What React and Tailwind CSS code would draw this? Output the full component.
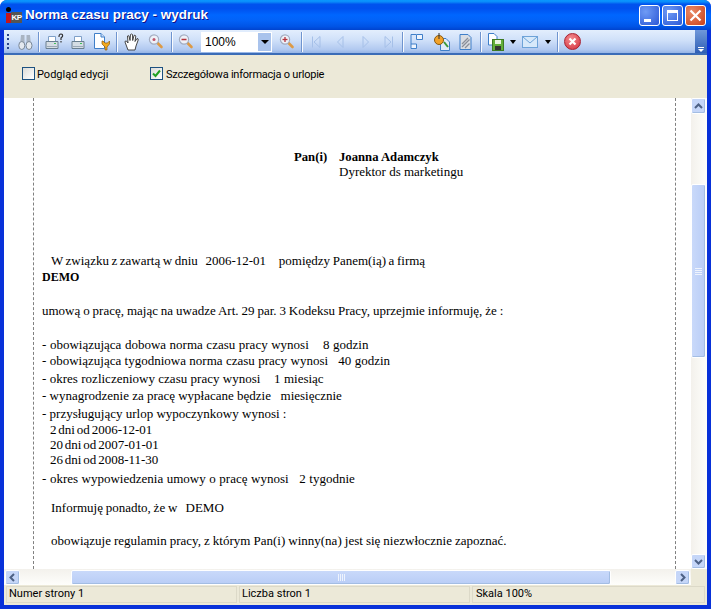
const lines = [
  { t: "W związku z zawartą w dniu   2006-12-01     pomiędzy Panem(ią) a firmą", top: 254, x: "pl-[9px] [word-spacing:-0.7px]" },
  { t: "DEMO", top: 270, x: "text-[12px] font-bold" },
  { t: "umową o pracę, mając na uwadze Art. 29 par. 3 Kodeksu Pracy, uprzejmie informuję, że :", top: 304, x: "[word-spacing:-0.33px]" },
  { t: "- obowiązująca dobowa norma czasu pracy wynosi    8 godzin", top: 338, x: "[word-spacing:0.3px]" },
  { t: "- obowiązująca tygodniowa norma czasu pracy wynosi   40 godzin", top: 354, x: "[word-spacing:0.15px]" },
  { t: "- okres rozliczeniowy czasu pracy wynosi    1 miesiąc", top: 372, x: "[word-spacing:0.15px]" },
  { t: "- wynagrodzenie za pracę wypłacane będzie   miesięcznie", top: 389, x: "[word-spacing:-0.05px]" },
  { t: "- przysługujący urlop wypoczynkowy wynosi :", top: 407, x: "[word-spacing:0px]" },
  { t: "2 dni od 2006-12-01", top: 423, x: "pl-[8px] [word-spacing:-1.4px]" },
  { t: "20 dni od 2007-01-01", top: 438, x: "pl-[8px] [word-spacing:-1.4px]" },
  { t: "26 dni od 2008-11-30", top: 453, x: "pl-[8px] [word-spacing:-1.4px]" },
  { t: "- okres wypowiedzenia umowy o pracę wynosi   2 tygodnie", top: 472, x: "[word-spacing:0.3px]" },
  { t: "Informuję ponadto, że w   DEMO", top: 501, x: "pl-[9px] [word-spacing:-0.5px]" },
  { t: "obowiązuje regulamin pracy, z którym Pan(i) winny(na) jest się niezwłocznie zapoznać.", top: 534, x: "pl-[9px] [word-spacing:-0.2px]" },
];

function Sep({ ml }) {
  return <div className={`${ml} h-[20px] w-[2px] border-l border-[#6f94cf] bg-white/90`} />;
}

function Ic({ ml, w, children }) {
  return (
    <svg className={`${ml} shrink-0`} width={w} height="18" viewBox={`0 0 ${w} 18`}>
      {children}
    </svg>
  );
}

function Glass({ mark }) {
  return (
    <>
      <path d="M9.5 10 L13.5 14" stroke="#dd9a45" strokeWidth="2.6" strokeLinecap="round" />
      <circle cx="6" cy="6.5" r="4.6" fill="#eef1f8" stroke="#a3acc0" strokeWidth="1.2" />
      {mark === "dot" && <circle cx="6" cy="6.5" r="1.5" fill="#c0556a" />}
      {mark !== "dot" && <path d="M3.5 6.5 H8.5" stroke="#b5343c" strokeWidth="1.3" />}
      {mark === "plus" && <path d="M6 4 V9" stroke="#b5343c" strokeWidth="1.3" />}
    </>
  );
}

function Printer({ x = 0 }) {
  return (
    <g transform={`translate(${x} 1)`}>
      <path d="M3.5 2.5 H10.5 V8.5 H3.5 Z" fill="#fff" stroke="#7fa0c8" />
      <path d="M1 7.5 H13 V14.5 H1 Z" fill="#d5dde4" stroke="#6a7f8f" />
      <path d="M2 12.5 H12" stroke="#9aa8b6" />
      <rect x="9" y="9" width="2" height="1" fill="#3fc05a" />
    </g>
  );
}

function Nav({ d }) {
  return <path d={d} fill="none" stroke="#a6c0e8" strokeWidth="1" />;
}

function Caret({ ml }) {
  return <div className={`${ml} h-0 w-0 border-x-[3px] border-t-[4px] border-x-transparent border-t-black`} />;
}

function Check({ checked, ml }) {
  return (
    <div className={`${ml || ""} flex items-center`}>
      <div className="flex h-[13px] w-[13px] items-center justify-center border border-[#1c5180] bg-[linear-gradient(135deg,#dcdcd7,#ffffff)]">
        {checked && (
          <svg width="9" height="9" viewBox="0 0 9 9">
            <path d="M1 4.5 L3.5 7 L8 1.5" fill="none" stroke="#21a121" strokeWidth="2" />
          </svg>
        )}
      </div>
    </div>
  );
}

function ScrollBtn({ d, className }) {
  return (
    <div className={`flex h-[15px] w-[15px] shrink-0 items-center justify-center rounded-[2px] border border-white bg-[#c5d6f8] shadow-[inset_-1px_-1px_0_#a3bde3] ${className || ""}`}>
      <svg width="9" height="9" viewBox="0 0 9 9">
        <path d={d} fill="none" stroke="#4d6185" strokeWidth="2" />
      </svg>
    </div>
  );
}

export default function App() {
  return (
    <div className="flex h-[609px] w-[711px] flex-col overflow-hidden rounded-t-[7px] bg-[#0831d9] font-['Roboto',sans-serif] text-[11px] text-black">
      {/* Title bar */}
      <div className="flex h-[30px] shrink-0 items-center bg-[linear-gradient(180deg,#0997ff_0%,#0a8cfa_6%,#0053ee_14%,#0050ee_28%,#0066ff_50%,#0262f8_68%,#0054e6_88%,#0043cf_100%)] pl-[6px] pr-[5px]">
        <div className="relative flex h-[16px] w-[16px] items-end">
          <div className="absolute left-0 top-0 h-[5px] w-[5px] rounded-full bg-black" />
          <div className="h-[10px] w-[5px] bg-[#c4161c]" />
          <div className="flex h-[11px] w-[11px] items-center justify-center bg-[#555] font-['Liberation_Sans',sans-serif] text-[8px] font-bold leading-none tracking-[-0.5px] text-white">KP</div>
        </div>
        <div className="ml-[3px] font-['Liberation_Sans',sans-serif] text-[13.5px] font-bold leading-none text-white [text-shadow:1px_1px_0_#0f1089]">Norma czasu pracy - wydruk</div>
        <div className="ml-auto flex gap-[2px]">
          <div className="flex h-[21px] w-[21px] items-end rounded-[3px] border border-white bg-[radial-gradient(circle_at_30%_30%,#6f9bf5,#2a57d6)] pb-[3px] pl-[4px]">
            <div className="h-[3px] w-[7px] bg-white" />
          </div>
          <div className="flex h-[21px] w-[21px] items-center justify-center rounded-[3px] border border-white bg-[radial-gradient(circle_at_30%_30%,#6f9bf5,#2a57d6)]">
            <div className="h-[11px] w-[11px] border border-t-[3px] border-white" />
          </div>
          <div className="flex h-[21px] w-[21px] items-center justify-center rounded-[3px] border border-white bg-[radial-gradient(circle_at_30%_30%,#ea8a66,#c9401a)]">
            <svg width="13" height="13" viewBox="0 0 13 13">
              <path d="M1.5 1.5 L11.5 11.5 M11.5 1.5 L1.5 11.5" stroke="#fff" strokeWidth="2.2" />
            </svg>
          </div>
        </div>
      </div>

      {/* Body */}
      <div className="mx-[4px] flex min-h-0 flex-1 flex-col bg-[#ece9d8]">
        {/* Toolbar */}
        <div className="flex h-[25px] shrink-0 items-center border-b-2 border-[#3b6cb7] bg-[linear-gradient(180deg,#e3eefd_0%,#cfe0f9_45%,#b1c9f0_85%,#95b4e6_100%)]">
          <div className="ml-[3px] flex h-[16px] w-[2px] flex-col justify-between">
            <div className="h-[2px] w-[2px] bg-[#27418a]" />
            <div className="h-[2px] w-[2px] bg-[#27418a]" />
            <div className="h-[2px] w-[2px] bg-[#27418a]" />
            <div className="h-[2px] w-[2px] bg-[#27418a]" />
          </div>
          <Ic ml="ml-[9px]" w={15}>
            <path d="M3 2 H6.5 V12 H2 Z" fill="#a9b4c2" />
            <path d="M8.5 2 H12 L13 12 H8.5 Z" fill="#a9b4c2" />
            <ellipse cx="3.8" cy="12.5" rx="3" ry="4" fill="#e4e9f0" stroke="#7a8898" />
            <ellipse cx="11" cy="12.5" rx="3" ry="4" fill="#e4e9f0" stroke="#7a8898" />
          </Ic>
          <Sep ml="ml-[5px]" />
          <Ic ml="ml-[5px]" w={19}>
            <Printer x={0} />
            <path d="M14 4 Q14 1 16 1 Q18 1 17.5 3.5 L16 5 V7 M16 8 V9.5" fill="none" stroke="#333" strokeWidth="1.2" />
          </Ic>
          <Ic ml="ml-[7px]" w={14}>
            <Printer />
          </Ic>
          <Ic ml="ml-[8px]" w={17}>
            <path d="M1.5 0.5 H8 L11.5 4 V15.5 H1.5 Z" fill="#fff" stroke="#3f7fc9" />
            <path d="M8 0.5 V4 H11.5" fill="#cfe0f9" stroke="#3f7fc9" />
            <path d="M9 8 V11 L12 14 V17 H14 V14 L16.5 11 V8 L14.5 10 H12 L10 8 Z" fill="#f2a91e" stroke="#8a5a10" strokeWidth="0.7" />
          </Ic>
          <Sep ml="ml-[6px]" />
          <Ic ml="ml-[6px]" w={16}>
            <path d="M4 17 L1 9 Q1 7.5 2.5 8 L4 10 L3.5 3 Q4 2 5 3 L6 7.5 L6.5 1.5 Q7.5 0.5 8.5 1.5 L8.7 7.5 L10 2.5 Q11 1.5 11.8 3 L11 8.5 L13 5.5 Q14.5 5.5 14.2 7 L12 13 L11 17 Z" fill="#fff" stroke="#333" strokeWidth="0.9" />
          </Ic>
          <Ic ml="ml-[8px]" w={16}>
            <Glass mark="dot" />
          </Ic>
          <Sep ml="ml-[7px]" />
          <Ic ml="ml-[5px]" w={16}>
            <Glass mark="minus" />
          </Ic>
          <div className="ml-[7px] flex h-[20px] w-[71px] items-center bg-white">
            <div className="flex-1 pl-[4px] font-['Liberation_Sans',sans-serif] text-[12px]">100%</div>
            <div className="flex h-[20px] w-[14px] items-center justify-center border border-l-0 border-white bg-[#a9c3ec]">
              <div className="h-0 w-0 border-x-[4px] border-t-[4px] border-x-transparent border-t-black" />
            </div>
          </div>
          <Ic ml="ml-[7px]" w={16}>
            <Glass mark="plus" />
          </Ic>
          <Sep ml="ml-[6px]" />
          <Ic ml="ml-[9px]" w={9}>
            <Nav d="M0.5 3.5 V14.5 M8 3.5 V14.5 L2 9 Z" />
          </Ic>
          <Ic ml="ml-[16px]" w={7}>
            <Nav d="M6 3.5 V14.5 L0.5 9 Z" />
          </Ic>
          <Ic ml="ml-[18px]" w={7}>
            <Nav d="M1 3.5 V14.5 L6.5 9 Z" />
          </Ic>
          <Ic ml="ml-[15px]" w={9}>
            <Nav d="M8.5 3.5 V14.5 M1 3.5 V14.5 L7 9 Z" />
          </Ic>
          <Sep ml="ml-[9px]" />
          <Ic ml="ml-[6px]" w={14}>
            <path d="M1 1.5 H6.5 V6.5 H12.5 V1.5 H7 M1 1.5 V15.5 H6.5 V11 H1" fill="#eef4fd" stroke="#3f7fc9" />
          </Ic>
          <Ic ml="ml-[10px]" w={16}>
            <path d="M6.5 5.5 H12 L15.5 9 V17.5 H6.5 Z" fill="#dfeafb" stroke="#3f7fc9" />
            <path d="M10 9 L14 14" stroke="#3a9a3a" strokeWidth="2" />
            <circle cx="5" cy="7" r="4.5" fill="#f2a22a" stroke="#8a5a10" />
            <path d="M5 0 V6" stroke="#333" />
          </Ic>
          <Ic ml="ml-[9px]" w={13}>
            <path d="M1 1.5 H9 L12 4.5 V16.5 H1 Z" fill="#d9dde3" stroke="#3f7fc9" />
            <path d="M3 11 L9 5 M3 14 L10.5 6.5 M6 15 L10.5 10.5" stroke="#8a8f98" strokeWidth="1.3" />
          </Ic>
          <Sep ml="ml-[8px]" />
          <Ic ml="ml-[5px]" w={18}>
            <path d="M1.5 0.5 H7 L10 3.5 V12 H1.5 Z" fill="#fff" stroke="#3f7fc9" />
            <rect x="5.5" y="6.5" width="11" height="11" fill="#62ad3a" stroke="#3d7a22" />
            <rect x="8" y="7" width="6" height="4" fill="#e8f3df" />
            <rect x="8" y="13" width="6" height="4" fill="#333" />
          </Ic>
          <Caret ml="ml-[5px]" />
          <Ic ml="ml-[6px]" w={17}>
            <rect x="0.5" y="3.5" width="15" height="11" fill="#d7e9fa" stroke="#6ea3d8" />
            <path d="M1 4 L8 10 L15 4" fill="none" stroke="#6ea3d8" />
          </Ic>
          <Caret ml="ml-[6px]" />
          <Sep ml="ml-[6px]" />
          <div className="ml-[5px] flex h-[17px] w-[17px] items-center justify-center rounded-full border border-[#a82030] bg-[radial-gradient(circle_at_40%_30%,#f28a90,#d4303c)]">
            <svg width="9" height="9" viewBox="0 0 9 9">
              <path d="M1.5 1.5 L7.5 7.5 M7.5 1.5 L1.5 7.5" stroke="#fff" strokeWidth="2.2" />
            </svg>
          </div>
          <div className="relative ml-auto h-[23px] w-[12px] self-start bg-[linear-gradient(180deg,#6f97da,#2f5fb5)]">
            <div className="absolute bottom-[5px] left-[3px] h-[1px] w-[6px] bg-white" />
            <div className="absolute bottom-[1px] left-[3px] h-0 w-0 border-x-[3px] border-t-[3px] border-x-transparent border-t-white" />
          </div>
        </div>

        {/* Options */}
        <div className="flex h-[43px] shrink-0 items-start pt-[12px]">
          <Check ml="ml-[18px]" />
          <div className="ml-[2px] mt-[1px] w-[113px] leading-[14px]">Podgląd edycji</div>
          <Check checked />
          <div className="ml-[3px] mt-[1px] leading-[14px] tracking-[-0.22px]">Szczegółowa informacja o urlopie</div>
        </div>

        {/* Preview */}
        <div className="flex min-h-0 flex-1">
          <div className="min-w-0 flex-1 bg-white">
            <div className="relative ml-[29px] h-[471px] w-[643px] border-x border-dashed border-[#808080] font-['Liberation_Serif',serif] text-[13px] leading-[14px]">
              <div className="absolute left-[260px] top-[52px] w-[44px] text-[12.7px] font-bold">Pan(i)</div>
              <div className="absolute left-[305px] top-[52px] text-[12.7px] font-bold">Joanna Adamczyk</div>
              <div className="absolute left-[305px] top-[67px]">Dyrektor ds marketingu</div>
              {lines.map((l) => (
                <div
                  key={l.top}
                  style={{ top: l.top - 98 }}
                  className={`absolute left-[8px] whitespace-pre ${l.x}`}
                >
                  {l.t}
                </div>
              ))}
            </div>
          </div>
          <div className="flex w-[16px] shrink-0 flex-col bg-[linear-gradient(90deg,#f3f1ec,#fefefb)]">
            <ScrollBtn className="h-[16px]" d="M1 6 L4.5 2.5 L8 6" />
            <div className="mt-[70px] flex h-[174px] w-[15px] items-center justify-center rounded-[2px] border border-white bg-[linear-gradient(90deg,#c9d9fa,#b9cdf6)] shadow-[inset_-1px_-1px_0_#a3bde3]">
              <div className="flex flex-col gap-[1px]">
                <div className="h-[1px] w-[7px] bg-[#eef3fd]" />
                <div className="h-[1px] w-[7px] bg-[#eef3fd]" />
                <div className="h-[1px] w-[7px] bg-[#eef3fd]" />
                <div className="h-[1px] w-[7px] bg-[#eef3fd]" />
              </div>
            </div>
            <ScrollBtn className="mt-auto" d="M1 3 L4.5 6.5 L8 3" />
          </div>
        </div>

        {/* Horizontal scrollbar */}
        <div className="flex h-[16px] shrink-0">
          <div className="flex h-[16px] w-[687px] items-center bg-[linear-gradient(180deg,#f3f1ec,#fefefb)] pl-[1px]">
            <ScrollBtn d="M6 1 L2.5 4.5 L6 8" />
            <div className="ml-[51px] flex h-[15px] w-[540px] items-center justify-center rounded-[2px] border border-white bg-[linear-gradient(180deg,#c9d9fa,#b9cdf6)] shadow-[inset_-1px_-1px_0_#a3bde3]">
              <div className="flex gap-[1px]">
                <div className="h-[7px] w-[1px] bg-[#eef3fd]" />
                <div className="h-[7px] w-[1px] bg-[#eef3fd]" />
                <div className="h-[7px] w-[1px] bg-[#eef3fd]" />
                <div className="h-[7px] w-[1px] bg-[#eef3fd]" />
              </div>
            </div>
            <ScrollBtn className="ml-auto mr-[1px]" d="M3 1 L6.5 4.5 L3 8" />
          </div>
        </div>

        {/* Status bar */}
        <div className="flex h-[20px] shrink-0 gap-[2px] px-[2px] pt-[1px] pb-[2px]">
          <div className="flex w-[231px] items-center border border-[#dcd9c8] pl-[2px]">Numer strony 1</div>
          <div className="flex w-[231px] items-center border border-[#dcd9c8] pl-[2px]">Liczba stron 1</div>
          <div className="flex flex-1 items-center border border-[#dcd9c8] pl-[3px]">Skala 100%</div>
        </div>
      </div>
      <div className="h-[4px] shrink-0" />
    </div>
  );
}
